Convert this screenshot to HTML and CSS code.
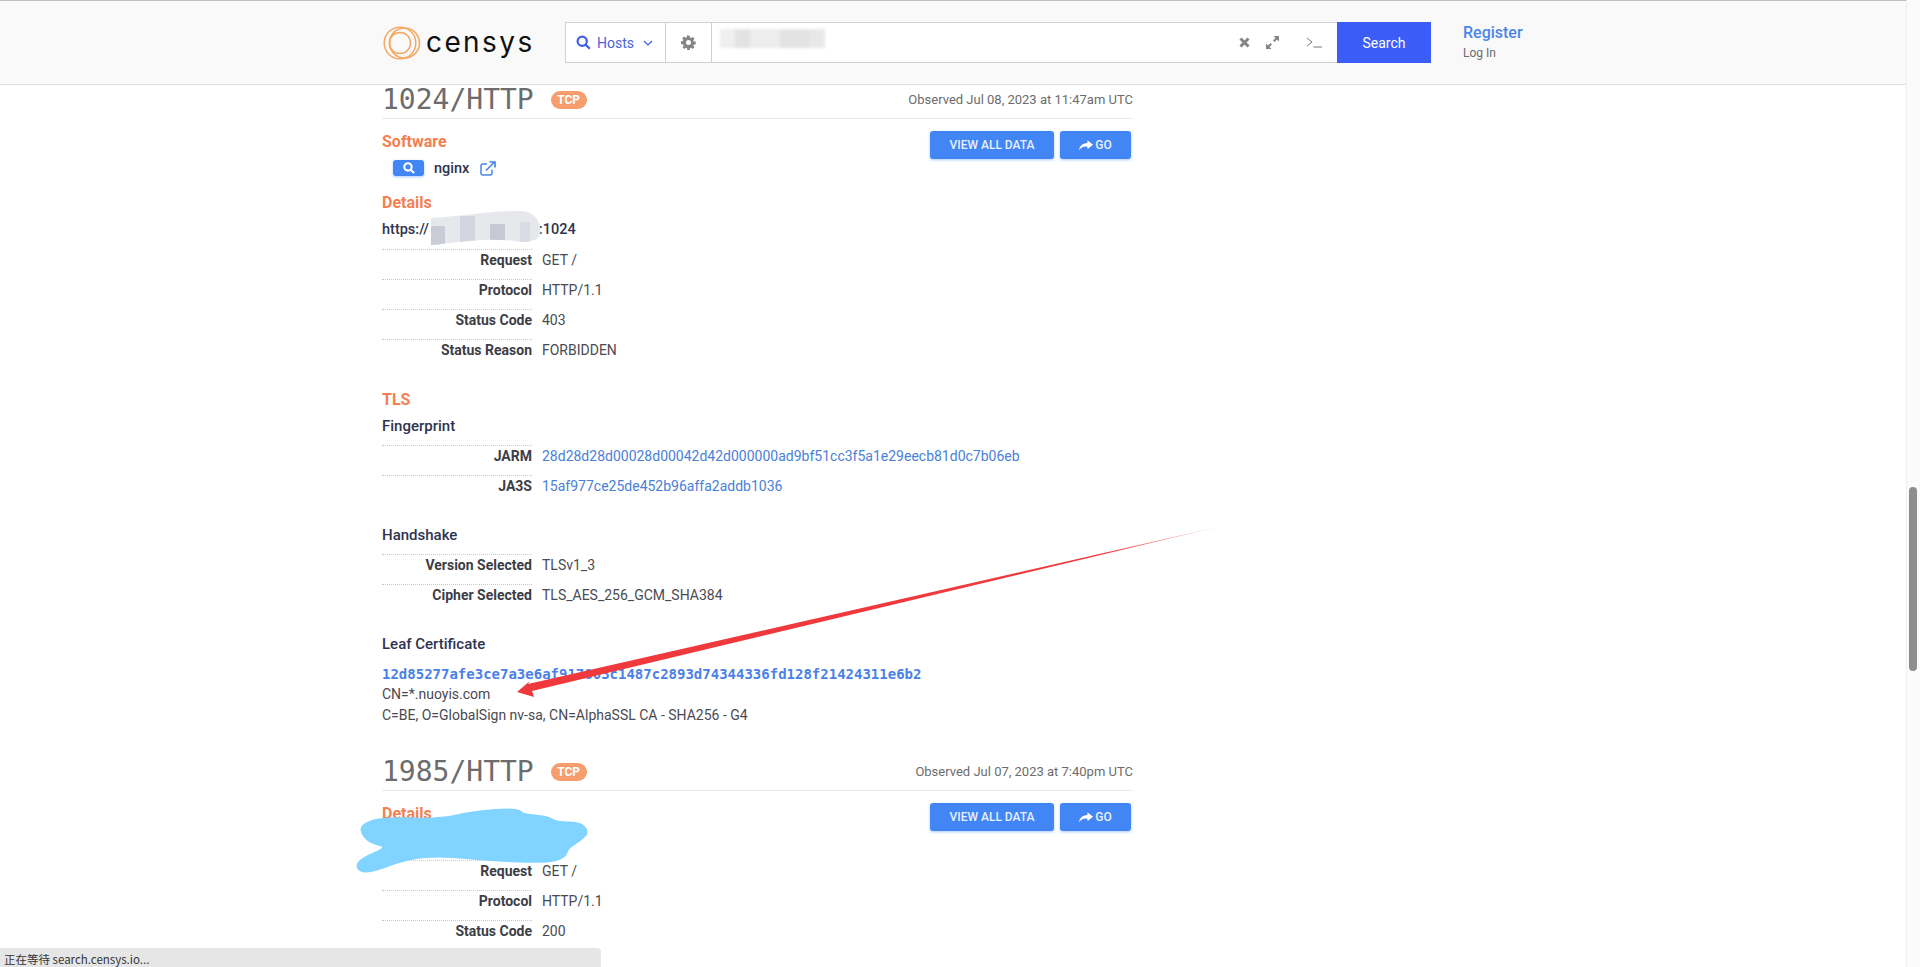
FILE: index.html
```html
<!DOCTYPE html>
<html lang="en">
<head>
<meta charset="utf-8">
<title>Censys</title>
<link rel="stylesheet" href="styles.css">
</head>
<body>
<header class="topbar">
  <a class="logo">
    <svg class="logo-mark" viewBox="0 0 38 34" width="38" height="34" fill="none" stroke="#f4a862" stroke-width="1.500"><circle cx="17" cy="17" r="15.800"/><circle cx="17" cy="17" r="10.500"/><circle cx="21.500" cy="17" r="15"/></svg>
    <span class="logo-text">censys</span>
  </a>
  <div class="searchbox">
    <div class="seg seg-type">
      <svg width="15" height="15" viewBox="0 0 15 15" fill="none" stroke="#3d5ee6" stroke-width="2.200"><circle cx="6.200" cy="6.200" r="4.600"/><path d="M9.600 9.600l4.200 4.200"/></svg>
      <span>Hosts</span>
      <svg width="10" height="6" viewBox="0 0 10 6" fill="none" stroke="#3d5ee6" stroke-width="1.200"><path d="M1 1l4 4 4-4"/></svg>
    </div>
    <div class="seg seg-gear">
      <svg width="15" height="15" viewBox="0 0 24 24" fill="#858585"><path d="M13.900 1l.5 3.100 1.900.8 2.600-1.800 2.700 2.700-1.800 2.600.8 1.900 3.100.5v3.800l-3.100.5-.8 1.900 1.800 2.600-2.700 2.700-2.600-1.800-1.900.8-.5 3.100h-3.800l-.5-3.100-1.900-.8-2.600 1.800-2.700-2.700 1.800-2.600-.8-1.900L-.1 14v-3.800l3.100-.5.8-1.900L2 5.200l2.700-2.700 2.600 1.800 1.900-.8.5-3.100zM12 8a4 4 0 100 8 4 4 0 000-8z"/></svg>
    </div>
    <div class="seg-input">
      <div class="input-blur"></div>
      <div class="input-tools">
        <svg class="tool-x" width="11" height="11" viewBox="0 0 11 11" stroke="#858585" stroke-width="3"><path d="M1.500 1.500l8 8M9.500 1.500l-8 8"/></svg>
        <svg class="tool-expand" width="13" height="13" viewBox="0 0 13 13" fill="#858585"><path d="M7.500 0H13v5.500l-2-2L8.500 6 7 4.500 9.500 2zM5.500 13H0V7.500l2 2L4.500 7 6 8.500 3.500 11z"/></svg>
        <svg class="tool-term" width="16" height="11" viewBox="0 0 16 11" fill="none" stroke="#777" stroke-width="1"><path d="M1 1l5 4-5 4M7.500 10H16"/></svg>
      </div>
    </div>
    <button class="search-btn">Search</button>
  </div>
  <div class="account">
    <a class="register">Register</a>
    <a class="login">Log In</a>
  </div>
</header>

<main class="content">
  <section class="service">
    <div class="service-head">
      <h2 class="port">1024/HTTP</h2><span class="badge">TCP</span>
      <span class="observed">Observed Jul 08, 2023 at 11:47am UTC</span>
    </div>
    <div class="actions">
      <a class="btn">VIEW ALL DATA</a>
      <a class="btn btn-go"><svg width="14" height="11" viewBox="0 0 15 11" fill="#fff"><path d="M9 0l6 4.700L9 9.400V6.500C5 6.300 2.300 7.400 0 10.500 .8 6 3.400 3.200 9 2.800z"/></svg>GO</a>
    </div>
    <h3 class="label">Software</h3>
    <div class="software">
      <span class="mini-btn"><svg width="12" height="12" viewBox="0 0 15 15" fill="none" stroke="#fff" stroke-width="2.600"><circle cx="6.200" cy="6.200" r="4.600"/><path d="M9.600 9.600l4.200 4.200"/></svg></span>
      <span class="software-name">nginx</span>
      <svg width="16" height="15" viewBox="0 0 16 15" fill="none" stroke="#4a86e8" stroke-width="1.500"><path d="M12 8.500V12a2 2 0 01-2 2H3a2 2 0 01-2-2V5a2 2 0 012-2h4"/><path d="M6 9.500L14.500 1M9.500 1h5.500v5.500" stroke-width="1.700"/></svg>
    </div>
    <h3 class="label label-details">Details</h3>
    <div class="url">https://<span class="url-gap"></span>:1024</div>
    <dl class="kv">
      <div class="kv-row"><dt>Request</dt><dd>GET /</dd></div>
      <div class="kv-row"><dt>Protocol</dt><dd>HTTP/1.1</dd></div>
      <div class="kv-row"><dt>Status Code</dt><dd>403</dd></div>
      <div class="kv-row"><dt>Status Reason</dt><dd>FORBIDDEN</dd></div>
    </dl>
    <h3 class="label label-tls">TLS</h3>
    <h4 class="sub">Fingerprint</h4>
    <dl class="kv">
      <div class="kv-row"><dt>JARM</dt><dd><a>28d28d28d00028d00042d42d000000ad9bf51cc3f5a1e29eecb81d0c7b06eb</a></dd></div>
      <div class="kv-row"><dt>JA3S</dt><dd><a>15af977ce25de452b96affa2addb1036</a></dd></div>
    </dl>
    <h4 class="sub sub-gap">Handshake</h4>
    <dl class="kv">
      <div class="kv-row"><dt>Version Selected</dt><dd>TLSv1_3</dd></div>
      <div class="kv-row"><dt>Cipher Selected</dt><dd>TLS_AES_256_GCM_SHA384</dd></div>
    </dl>
    <h4 class="sub sub-gap">Leaf Certificate</h4>
    <a class="cert-hash">12d85277afe3ce7a3e6af917803c1487c2893d74344336fd128f21424311e6b2</a>
    <div class="cert-line">CN=*.nuoyis.com</div>
    <div class="cert-line">C=BE, O=GlobalSign nv-sa, CN=AlphaSSL CA - SHA256 - G4</div>
  </section>

  <section class="service service-next">
    <div class="service-head">
      <h2 class="port">1985/HTTP</h2><span class="badge">TCP</span>
      <span class="observed">Observed Jul 07, 2023 at 7:40pm UTC</span>
    </div>
    <div class="actions">
      <a class="btn">VIEW ALL DATA</a>
      <a class="btn btn-go"><svg width="14" height="11" viewBox="0 0 15 11" fill="#fff"><path d="M9 0l6 4.700L9 9.400V6.500C5 6.300 2.300 7.400 0 10.500 .8 6 3.400 3.200 9 2.800z"/></svg>GO</a>
    </div>
    <h3 class="label">Details</h3>
    <div class="url">https://</div>
    <dl class="kv">
      <div class="kv-row"><dt>Request</dt><dd>GET /</dd></div>
      <div class="kv-row"><dt>Protocol</dt><dd>HTTP/1.1</dd></div>
      <div class="kv-row"><dt>Status Code</dt><dd>200</dd></div>
    </dl>
  </section>
</main>

<svg class="annotations" width="1920" height="967" viewBox="0 0 1920 967">
  <defs>
    <linearGradient id="arrowFade" gradientUnits="userSpaceOnUse" x1="1222" y1="526" x2="1100" y2="555">
      <stop offset="0" stop-color="#f0393c" stop-opacity=".25"/>
      <stop offset="1" stop-color="#f0393c"/>
    </linearGradient>
    <clipPath id="urlBlob"><path d="M431 218c35-2 62-8 92-7 14 2 19 14 17 24-3 7-16 8-25 6-30-4-60 2-84 4z"/></clipPath>
  </defs>
  <g clip-path="url(#urlBlob)">
    <rect x="430" y="208" width="112" height="40" fill="#e6e8ec"/>
    <rect x="430" y="226" width="15" height="20" fill="#c9ccd6"/>
    <rect x="460" y="216" width="15" height="30" fill="#d3d6de"/>
    <rect x="490" y="224" width="15" height="20" fill="#c6c9d4"/>
    <rect x="520" y="222" width="10" height="20" fill="#dadce3"/>
  </g>
  <path d="M362 829Q362 825 372.500 821.500Q383 818 411.500 819Q440 820 456.500 816Q473 812 495 810.500Q517 809 520 812Q523 815 535 816Q547 817 552 820Q557 823 568.500 823Q580 823 584 827.500Q588 832 584 836Q580 840 573.500 844Q567 848 566 852.500Q565 857 556 859.500Q547 862 518.500 861Q490 860 466.500 857.500Q443 855 425 856.500Q407 858 387 865.500Q367 873 362 870.500Q357 868 358.500 864Q360 860 375 853.500Q390 847 380 844.500Q370 842 366 837.500Q362 833 362 829Z" fill="#80d4ff" stroke="#80d4ff" stroke-width="3" stroke-linejoin="round"/>
  <path d="M1222 526L528 684 530 681 517 692 534 697 532 691z" fill="url(#arrowFade)"/>
</svg>

<div class="status">正在等待 search.censys.io...</div>
<div class="scroll-track"><div class="scroll-thumb"></div></div>
</body>
</html>
```
FILE: styles.css
```css
* { box-sizing: border-box; }
html, body { margin: 0; height: 100%; overflow: hidden; background: #fff; }
body { font-family: Roboto, "Liberation Sans", sans-serif; font-size: 14px; color: #3d3d46; }
h2, h3, h4, dl, dd { margin: 0; }

.topbar {
  position: absolute; top: 0; left: 0; right: 0; height: 85px; z-index: 2;
  background: #f9f9fa; border-top: 1px solid #bdbdbd; border-bottom: 1px solid #dcdce4;
  display: flex; align-items: flex-start; padding: 21px 0 0 382px;
}
.logo { display: flex; align-items: center; width: 183px; height: 41px; }
.logo-mark { flex: none; margin-left: 1px; }
.logo-text { font-family: Inter, sans-serif; font-size: 28px; color: #111; margin-left: 5px; letter-spacing: 2.400px; line-height: 34px; margin-top: -2px; }
.searchbox { display: flex; width: 866px; height: 41px; border: 1px solid #cfcfd6; background: #fff; }
.seg { display: flex; align-items: center; justify-content: center; border-right: 1px solid #cfcfd6; }
.seg-type { width: 100px; gap: 6px; color: #4a63d9; font-size: 14px; padding-right: 2px; }
.seg-type span { margin-right: 3px; }
.seg-gear { width: 46px; }
.seg-input { flex: 1; position: relative; display: flex; justify-content: flex-end; align-items: center; }
.input-blur { position: absolute; left: 8px; top: 6px; width: 105px; height: 19px; filter: blur(1.500px); background: linear-gradient(90deg, #efefef 0 15px, #e2e2e2 15px 30px, #ededed 30px 60px, #e3e3e3 60px 90px, #e8e8e8 90px 105px); }
.input-tools { display: flex; align-items: center; padding-right: 15px; }
.tool-expand { margin-left: 16px; }
.tool-term { margin-left: 27px; }
.search-btn { width: 94px; border: 0; background: #3b5cf6; color: #fff; font: 14px Roboto, sans-serif; padding: 0; margin: -1px -1px -1px 0; }
.account { display: flex; flex-direction: column; margin-left: 32px; margin-top: 1px; }
.register { color: #4a86e8; font-size: 16px; font-weight: 500; line-height: 20px; }
.login { color: #6b6b73; font-size: 12px; line-height: 20px; }

.content { width: 751px; margin-left: 382px; padding-top: 85px; }
.service-head { display: flex; align-items: center; height: 34px; border-bottom: 1px solid #e9e9ee; padding-bottom: 4px; }
.port { font-family: "DejaVu Sans Mono", monospace; font-weight: 400; font-size: 28px; line-height: 30px; color: #6c6c6c; }
.badge { margin-left: 17px; background: #f79d6d; color: #fff; font-size: 12px; font-weight: 700; height: 18px; line-height: 18px; padding: 0 6.500px; border-radius: 9px; }
.observed { margin-left: auto; color: #6c6c6c; font-size: 13px; }
.actions { display: flex; justify-content: flex-end; gap: 6px; padding-right: 2px; height: 0; position: relative; top: 12px; }
.btn { display: flex; align-items: center; justify-content: center; gap: 2px; width: 124px; height: 28px; background: #4285f4; color: #e8f1ff; font-size: 12px; font-weight: 500; border-radius: 3px; box-shadow: 0 1px 3px rgba(66,133,244,.45); }
.btn-go { width: 71px; }
.btn svg { flex: none; }
.label { font-size: 16px; font-weight: 700; color: #f47f52; line-height: 20px; margin-top: 13px; }
.software { display: flex; align-items: center; height: 20px; margin-top: 6px; padding-left: 11px; }
.mini-btn { display: flex; align-items: center; justify-content: center; width: 31px; height: 16px; background: #4285f4; border-radius: 3px; box-shadow: 0 1px 3px rgba(66,133,244,.45); }
.software-name { margin: 0 11px 0 10px; font-size: 14.500px; font-weight: 500; color: #2f3350; }
.label-details { margin-top: 15px; }
.url { font-size: 14.500px; font-weight: 500; color: #2f3350; line-height: 20px; margin-top: 7px; }
.url-gap { display: inline-block; width: 110px; }
.kv { margin-top: 9px; }
.kv-row { display: flex; align-items: flex-start; width: 150px; height: 30px; white-space: nowrap; }
.kv-row dt { flex: none; width: 150px; text-align: right; font-weight: 700; color: #3d3d46; border-top: 1px dotted #c9c9c9; line-height: 21px; }
.kv-row dd { flex: none; margin-left: 10px; color: #4a4a52; line-height: 23px; }
.kv-row dd a { color: #4a80d8; }
.label-tls { margin-top: 21px; }
.sub { font-size: 15px; font-weight: 500; color: #2f3350; line-height: 20px; margin-top: 6px; }
.sub-gap { margin-top: 20px; }
.cert-hash { display: block; margin-top: 10px; font-family: "DejaVu Sans Mono", monospace; font-weight: 700; font-size: 14px; line-height: 20px; color: #4a80e8; white-space: nowrap; }
.cert-line { line-height: 21px; color: #4a4a52; }
.service-next { margin-top: 31px; }

.annotations { position: absolute; top: 0; left: 0; z-index: 1; pointer-events: none; }
.status { position: absolute; left: 0; bottom: 0; width: 601px; height: 19px; z-index: 3; background: #e6e6e6; border-top-right-radius: 4px; font: 11.500px/22px "Noto Sans CJK SC", "Liberation Sans", sans-serif; color: #333; padding-left: 4px; }
.scroll-track { position: absolute; top: 0; right: 0; bottom: 0; width: 14px; background: #fbfbfb; border-left: 1px solid #f0f0f0; z-index: 3; }
.scroll-thumb { position: absolute; top: 487px; left: 2px; width: 8px; height: 184px; border-radius: 4px; background: #8e8e8e; }
```
